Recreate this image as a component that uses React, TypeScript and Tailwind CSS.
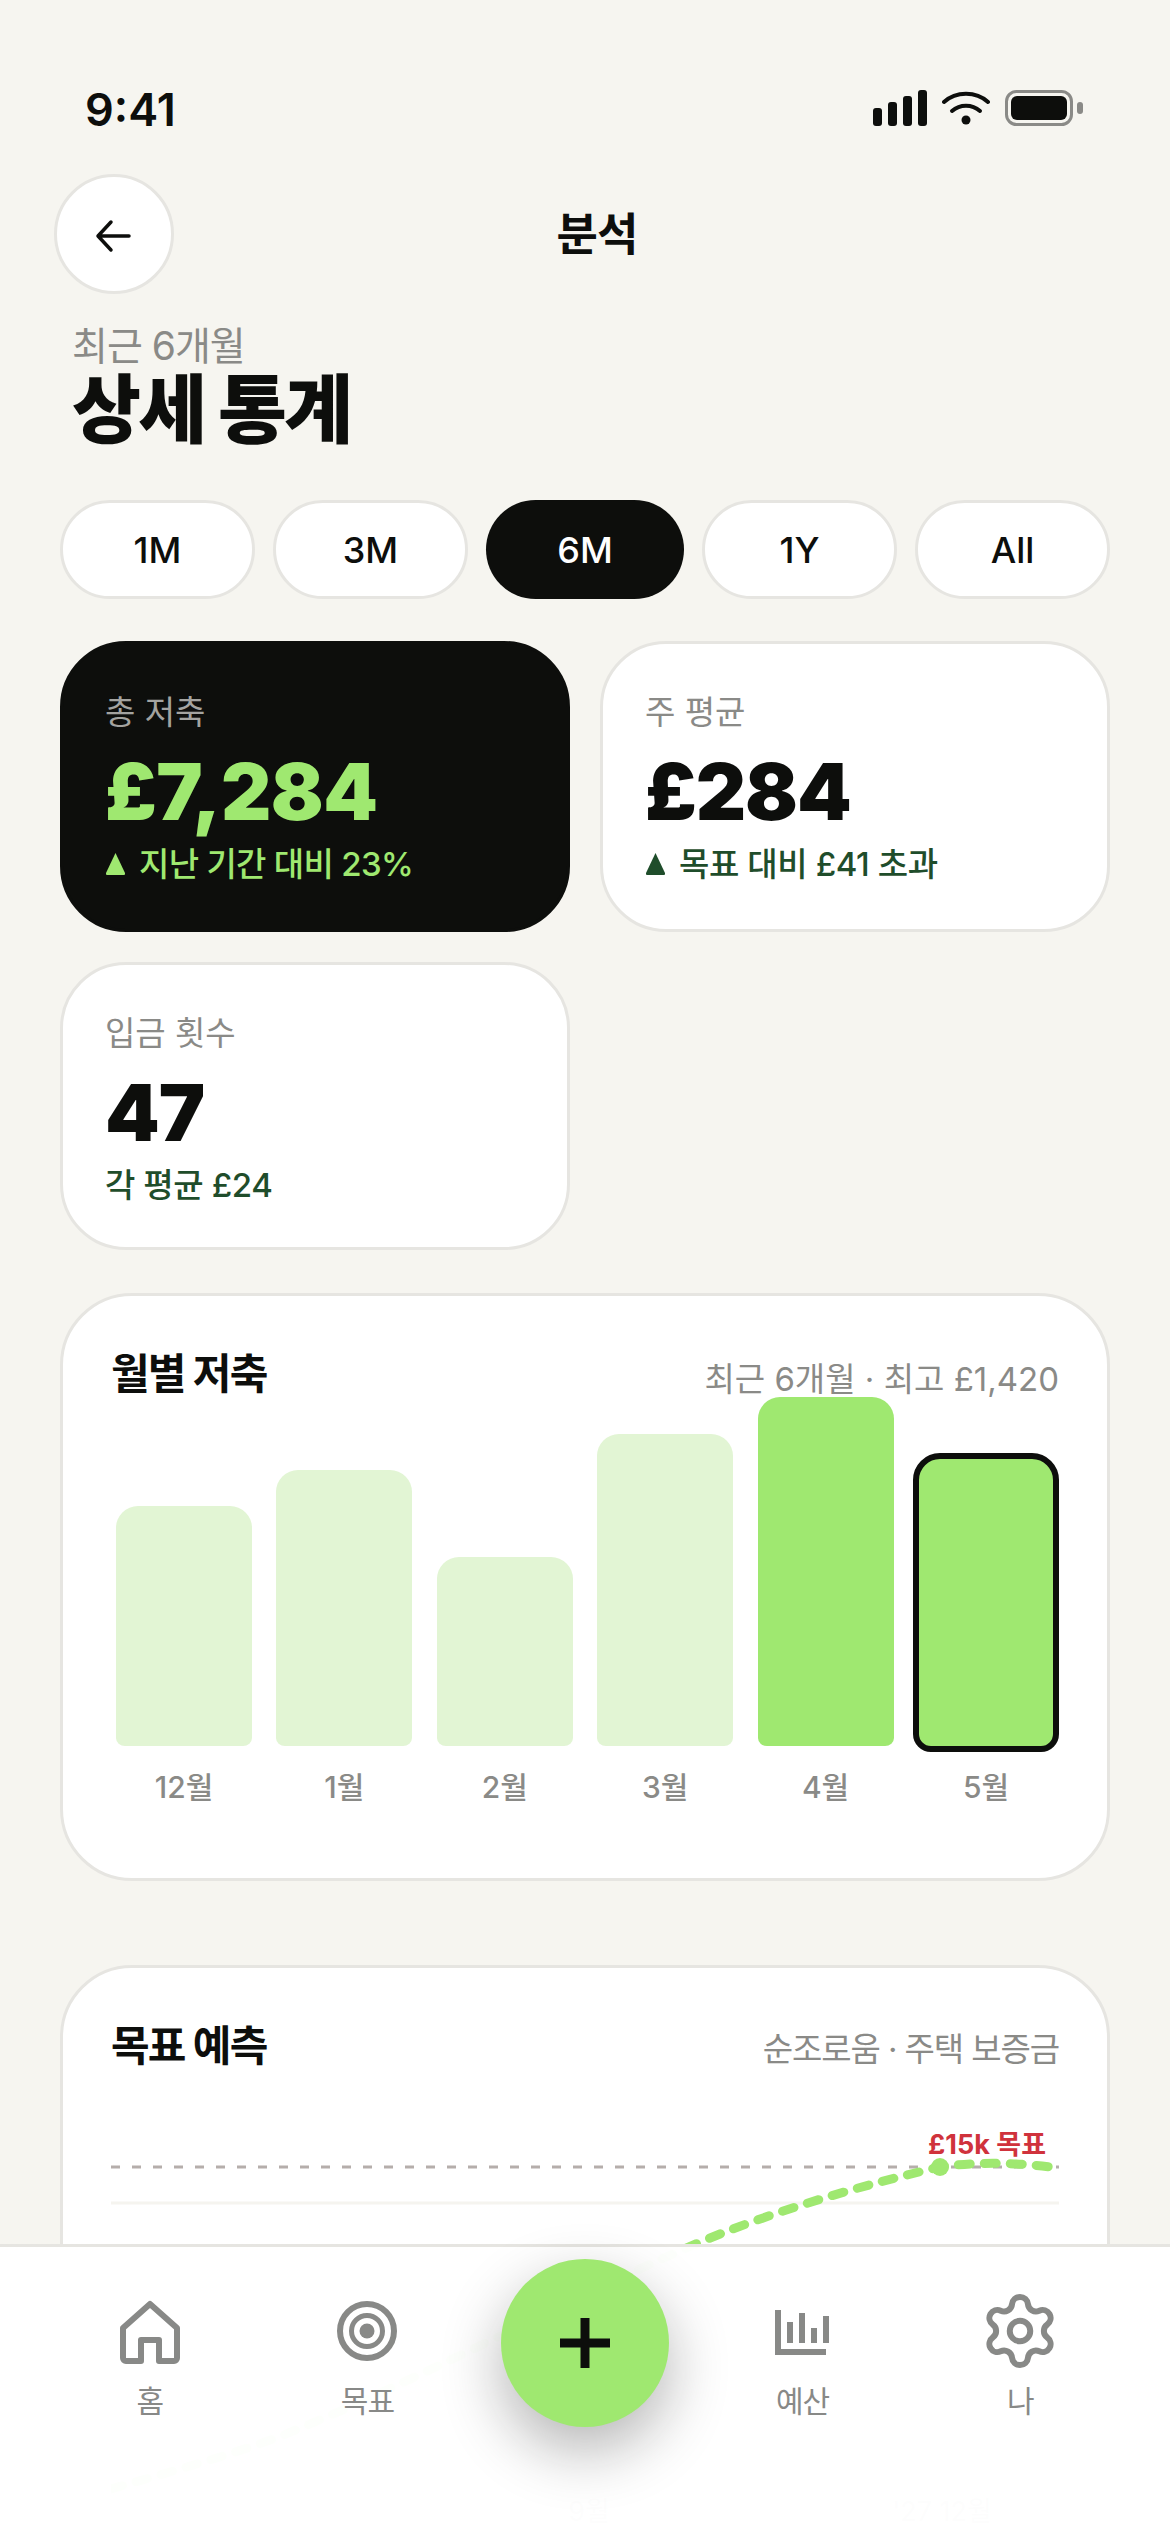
import { Settings } from "lucide-react";

const ranges = ["1M", "3M", "6M", "1Y", "All"];

const months = [
  { label: "12월", height: 251 },
  { label: "1월", height: 287 },
  { label: "2월", height: 200 },
  { label: "3월", height: 323 },
  { label: "4월", height: 360, strong: true },
  { label: "5월", height: 299, strong: true, current: true },
];

function StatusIcons() {
  return (
    <div className="flex items-center gap-[15px]">
      <svg width="54" height="36" viewBox="0 0 54 36" fill="#0d0e0c">
        <rect x="0" y="18" width="9" height="18" rx="3" />
        <rect x="15" y="12" width="9" height="24" rx="3" />
        <rect x="30" y="6" width="9" height="30" rx="3" />
        <rect x="45" y="0" width="9" height="36" rx="3" />
      </svg>
      <svg width="48" height="34" viewBox="0 0 48 34" fill="none" stroke="#0d0e0c" strokeWidth="4" strokeLinecap="round">
        <path d="M2 11 C14 0 34 0 46 11" />
        <path d="M10 20 C18 13 30 13 38 20" />
        <circle cx="24" cy="29" r="4.5" fill="#0d0e0c" stroke="none" />
      </svg>
      <svg width="78" height="36" viewBox="0 0 78 36" fill="none">
        <rect x="1.5" y="1.5" width="65" height="33" rx="10" stroke="#8a8a87" strokeWidth="3" />
        <rect x="6" y="6" width="56" height="24" rx="6" fill="#0d0e0c" />
        <rect x="72" y="12" width="6" height="12" rx="3" fill="#8a8a87" />
      </svg>
    </div>
  );
}

function StatCard({
  label,
  value,
  note,
  arrow,
  dark,
  short,
}: {
  label: string;
  value: string;
  note: string;
  arrow?: boolean;
  dark?: boolean;
  short?: boolean;
}) {
  return (
    <div
      className={
        dark
          ? "h-[291px] rounded-[66px] border-[3px] border-[#0d0e0c] bg-[#0d0e0c] px-[42px] pt-[45px]"
          : short
            ? "h-[288px] rounded-[66px] border-[3px] border-[#e6e5e1] bg-white px-[42px] pt-[45px]"
            : "h-[291px] rounded-[66px] border-[3px] border-[#e6e5e1] bg-white px-[42px] pt-[45px]"
      }
    >
      <div className={dark ? "text-[33px] leading-[46px] text-[#a3a3a0]" : "text-[33px] leading-[46px] text-[#8a8a87]"}>
        {label}
      </div>
      <div
        className={
          dark
            ? "mt-[15px] text-[78px] leading-[84px] font-black tracking-[-0.5px] text-[#9fe870]"
            : "mt-[15px] text-[78px] leading-[84px] font-black tracking-[-1px] text-[#0d0e0c]"
        }
      >
        {value}
      </div>
      <div
        className={
          dark
            ? "mt-[7px] flex items-center gap-[13px] text-[33px] leading-[46px] font-medium tracking-[-0.7px] text-[#9fe870]"
            : "mt-[7px] flex items-center gap-[13px] text-[33px] leading-[46px] font-medium tracking-[-0.4px] text-[#1f4d2b]"
        }
      >
        {arrow && (
          <svg width="21" height="24" viewBox="0 0 21 24" fill="currentColor">
            <path d="M10.5 1 L20 21 Q20.5 23 19 23 H2 Q0.5 23 1 21 Z" />
          </svg>
        )}
        <span>{note}</span>
      </div>
    </div>
  );
}

function NavItem({ label, children }: { label: string; children: React.ReactNode }) {
  return (
    <div className="flex flex-col items-center pt-[48px]">
      <div className="flex h-[72px] w-[72px] items-center justify-center text-[#888987]">{children}</div>
      <div className="mt-[13px] text-[30px] leading-[42px] tracking-[-1px] text-[#888987]">{label}</div>
    </div>
  );
}

export default function App() {
  return (
    <div className="relative h-[2532px] w-[1170px] overflow-hidden bg-[#f6f5f0] font-[Inter,'Noto_Sans_CJK_KR',sans-serif] text-[#0d0e0c]">
      {/* status bar */}
      <div className="flex h-[174px] items-start justify-between pr-[87px] pl-[85px] pt-[83px]">
        <div className="text-[45px] leading-[54px] font-semibold">9:41</div>
        <div className="pt-[7px]">
          <StatusIcons />
        </div>
      </div>

      {/* header */}
      <div className="flex h-[120px] items-center pr-[54px] pl-[54px]">
        <button className="flex h-[120px] w-[120px] items-center justify-center rounded-full border-[3px] border-[#e6e5e1] bg-white">
          <svg className="mt-[3px]" width="42" height="42" viewBox="0 0 42 42" fill="none" stroke="#0d0e0c" strokeWidth="3.5" strokeLinecap="round" strokeLinejoin="round">
            <path d="M36 21 H6 M18 7 L5 21 L18 35" />
          </svg>
        </button>
        <div className="flex-1 pt-[2px] text-center text-[45px] leading-[60px] font-semibold tracking-[-1px]">분석</div>
        <div className="w-[96px]" />
      </div>

      {/* page title */}
      <div className="pl-[72px] pt-[28px]">
        <div className="text-[39px] leading-[48px] tracking-[-1px] text-[#8a8a87]">최근 6개월</div>
        <div className="text-[75px] leading-[80px] font-extrabold tracking-[-2.8px]">상세 통계</div>
      </div>

      {/* range chips */}
      <div className="mt-[50px] flex gap-[18px] px-[60px]">
        {ranges.map((r) =>
          r === "6M" ? (
            <div key={r} className="flex h-[99px] w-[198px] items-center justify-center rounded-full bg-[#0d0e0c] text-[36px] font-medium text-white">
              {r}
            </div>
          ) : (
            <div key={r} className="flex h-[99px] w-[195px] items-center justify-center rounded-full border-[3px] border-[#e6e5e1] bg-white text-[36px] font-medium">
              {r}
            </div>
          ),
        )}
      </div>

      {/* stat cards */}
      <div className="mt-[42px] grid grid-cols-2 gap-x-[30px] gap-y-[30px] px-[60px]">
        <StatCard dark label="총 저축" value="£7,284" note="지난 기간 대비 23%" arrow />
        <StatCard label="주 평균" value="£284" note="목표 대비 £41 초과" arrow />
        <StatCard short label="입금 횟수" value="47" note="각 평균 £24" />
      </div>

      {/* monthly savings */}
      <div className="mx-[60px] mt-[43px] h-[588px] rounded-[72px] border-[3px] border-[#e6e5e1] bg-white px-[48px] pt-[48px]">
        <div className="flex items-start justify-between">
          <div className="text-[42px] leading-[60px] font-bold tracking-[-1.8px]">월별 저축</div>
          <div className="pt-[8px] text-[33px] leading-[54px] text-[#8a8a87]">최근 6개월 · 최고 £1,420</div>
        </div>
        <div className="-mt-[14px] flex h-[360px] items-end justify-between">
          {months.map((m) => (
            <div
              key={m.label}
              style={{ height: m.height }}
              className={
                m.current
                  ? "w-[146px] rounded-t-[27px] rounded-b-[18px] border-[6px] border-[#0d0e0c] bg-[#9fe870]"
                  : m.strong
                    ? "w-[146px] rounded-t-[27px] rounded-b-[14px] border-[5px] border-b-[6px] border-transparent bg-[#9fe870] bg-clip-padding"
                    : "w-[146px] rounded-t-[27px] rounded-b-[14px] border-[5px] border-b-[6px] border-transparent bg-[#e2f5d4] bg-clip-padding"
              }
            />
          ))}
        </div>
        <div className="mt-[14px] flex justify-between">
          {months.map((m) => (
            <div key={m.label} className="w-[146px] text-center text-[30px] leading-[42px] font-medium text-[#8a8a87]">
              {m.label}
            </div>
          ))}
        </div>
      </div>

      {/* goal forecast */}
      <div className="mx-[60px] mt-[84px] h-[700px] rounded-[72px] border-[3px] border-[#e6e5e1] bg-white px-[48px] pt-[48px]">
        <div className="flex items-start justify-between">
          <div className="text-[42px] leading-[60px] font-bold tracking-[-1.8px]">목표 예측</div>
          <div className="pt-[6px] text-[33px] leading-[54px] tracking-[-1.1px] text-[#8a8a87]">순조로움 · 주택 보증금</div>
        </div>
        <svg className="mt-[45px] block" width="948" height="440" viewBox="0 0 948 440" fill="none">
          <line x1="0" y1="46" x2="948" y2="46" stroke="#b5aeab" strokeWidth="3" strokeDasharray="9 12" />
          <line x1="0" y1="82" x2="948" y2="82" stroke="#f5f4ef" strokeWidth="3" />
          <path
            d="M0 368 C55 352 110 337 165 317 C320 255 480 165 609 113 C680 85 760 62 829 46 C870 40 910 42 948 47"
            stroke="#9fe870"
            strokeWidth="9"
            strokeLinecap="round"
            strokeDasharray="12 14"
          />
          <circle cx="829" cy="46" r="9" fill="#9fe870" />
          <text x="935" y="33" textAnchor="end" fill="#d0323c" fontSize="27" fontWeight="700">
            £15k 목표
          </text>
          <text x="478" y="400" textAnchor="middle" fill="#8a8a87" fontSize="27">
            9월
          </text>
          <text x="831" y="400" textAnchor="middle" fill="#8a8a87" fontSize="27">
            '27 12월
          </text>
        </svg>
      </div>

      {/* bottom nav */}
      <div className="absolute inset-x-0 bottom-0 h-[288px] border-t-[3px] border-[#e6e5e1] bg-white/[0.98]">
        <div className="grid grid-cols-5 px-[41px]">
          <NavItem label="홈">
            <svg width="72" height="72" viewBox="0 0 72 72" fill="none" stroke="currentColor" strokeWidth="6" strokeLinejoin="round">
              <path d="M9 33 L36 9 L63 33 V63 a3 3 0 0 1 -3 3 H45 V45 H27 V66 H12 a3 3 0 0 1 -3 -3 Z" />
            </svg>
          </NavItem>
          <NavItem label="목표">
            <svg width="72" height="72" viewBox="0 0 72 72" fill="none" stroke="currentColor">
              <circle cx="36" cy="36" r="27" strokeWidth="6" />
              <circle cx="36" cy="36" r="15.5" strokeWidth="5" />
              <circle cx="36" cy="36" r="7.5" fill="currentColor" stroke="none" />
            </svg>
          </NavItem>
          <div className="flex justify-center pt-[12px]">
            <div className="flex h-[168px] w-[168px] items-center justify-center rounded-full bg-[#9fe870] shadow-[0_24px_60px_rgba(13,14,12,0.3)]">
              <svg width="54" height="54" viewBox="0 0 54 54" fill="none" stroke="#0d0e0c" strokeWidth="9">
                <path d="M27 2 V52 M2 27 H52" />
              </svg>
            </div>
          </div>
          <NavItem label="예산">
            <svg width="72" height="72" viewBox="0 0 72 72" fill="none" stroke="currentColor" strokeWidth="6">
              <path d="M11 15 V57 H59" />
              <path d="M23 48 V27 M35 48 V18 M47 48 V33 M59 48 V21" />
            </svg>
          </NavItem>
          <NavItem label="나">
            <Settings size={82} strokeWidth={1.75} className="shrink-0" />
          </NavItem>
        </div>
      </div>
    </div>
  );
}
